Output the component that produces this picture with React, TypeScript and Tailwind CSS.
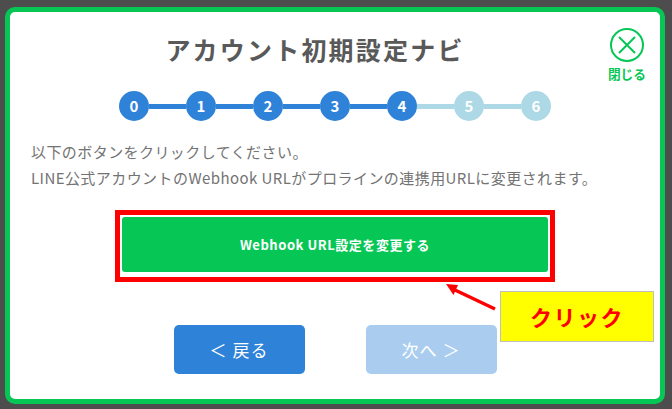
import React from 'react';

const FONT = '"Noto Sans CJK JP", "Noto Sans", sans-serif';

const steps = [0, 1, 2, 3, 4, 5, 6];
const current = 4;

const StepBar: React.FC = () => (
  <div className="flex items-center justify-center mt-[20px]">
    {steps.map((n, i) => (
      <React.Fragment key={n}>
        {i > 0 && <div className={`w-[37px] h-[5px] ${n <= current ? 'bg-[#2e82d8]' : 'bg-[#add8e6]'}`} />}
        <div
          className={`w-[30px] h-[30px] rounded-full flex items-center justify-center text-white text-[15px] font-bold ${
            n <= current ? 'bg-[#2e82d8]' : 'bg-[#add8e6]'
          }`}
        >
          {n}
        </div>
      </React.Fragment>
    ))}
  </div>
);

export default function App() {
  return (
    <div className="w-[672px] h-[409px] bg-[#4d4d4d] pt-[7px] pb-[5px] pl-[5px] pr-[7px]" style={{ fontFamily: FONT }}>
      <div className="relative w-full h-full bg-white border-[5px] border-[#06c755] rounded-[10px] text-[#595959]">
        {/* close */}
        <div className="absolute top-[16px] right-[14px] flex flex-col items-center text-[#06c755]">
          <svg width="34" height="34" viewBox="0 0 34 34" fill="none" stroke="#06c755" strokeWidth="2">
            <circle cx="17" cy="17" r="16" />
            <path d="M9 9 25 25M25 9 9 25" />
          </svg>
          <span className="mt-[4px] text-[12.7px] leading-[16px] font-bold">閉じる</span>
        </div>

        <h1 className="pt-[15px] pr-[40px] text-center text-[25px] leading-[44px] font-bold tracking-[2.2px]">
          アカウント初期設定ナビ
        </h1>

        <StepBar />

        <div className="mt-[18px] pl-[21px] text-[15px] leading-[26px] tracking-[0.43px] text-[#737373]">
          <p>以下のボタンをクリックしてください。</p>
          <p>LINE公式アカウントのWebhook URLがプロラインの連携用URLに変更されます。</p>
        </div>

        <div className="mt-[26px] mx-[112px] h-[55px] flex items-center justify-center rounded-[3px] bg-[#06c755] text-white text-[13px] font-bold tracking-[0.55px]">
          Webhook URL設定を変更する
        </div>

        <div className="mt-[53px] flex justify-center gap-[61px]">
          <div className="w-[131px] h-[49px] rounded-[5px] bg-[#2e82d8] text-white text-[17px] flex items-center justify-center tracking-[1px]">
            ＜ 戻る
          </div>
          <div className="w-[131px] h-[49px] rounded-[5px] bg-[#aacdef] text-white text-[17px] flex items-center justify-center tracking-[1px]">
            次へ ＞
          </div>
        </div>

        {/* annotation */}
        <div className="absolute left-[105px] top-[198px] w-[440px] h-[72px] border-[5px] border-[#ff0000]" />
        <svg className="absolute left-[430px] top-[270px]" width="66" height="36" viewBox="0 0 66 36">
          <path d="M55 27 15 8" stroke="#ff0000" strokeWidth="3.5" />
          <path d="M6 2 18 3 13.500 13Z" fill="#ff0000" />
        </svg>
        <div className="absolute left-[490px] top-[279px] w-[154px] h-[51px] bg-[#ffff00] border border-[#bfbfbf] flex items-center justify-center text-[#ff0000] text-[22px] font-bold tracking-[1.5px]">
          クリック
        </div>
      </div>
    </div>
  );
}
